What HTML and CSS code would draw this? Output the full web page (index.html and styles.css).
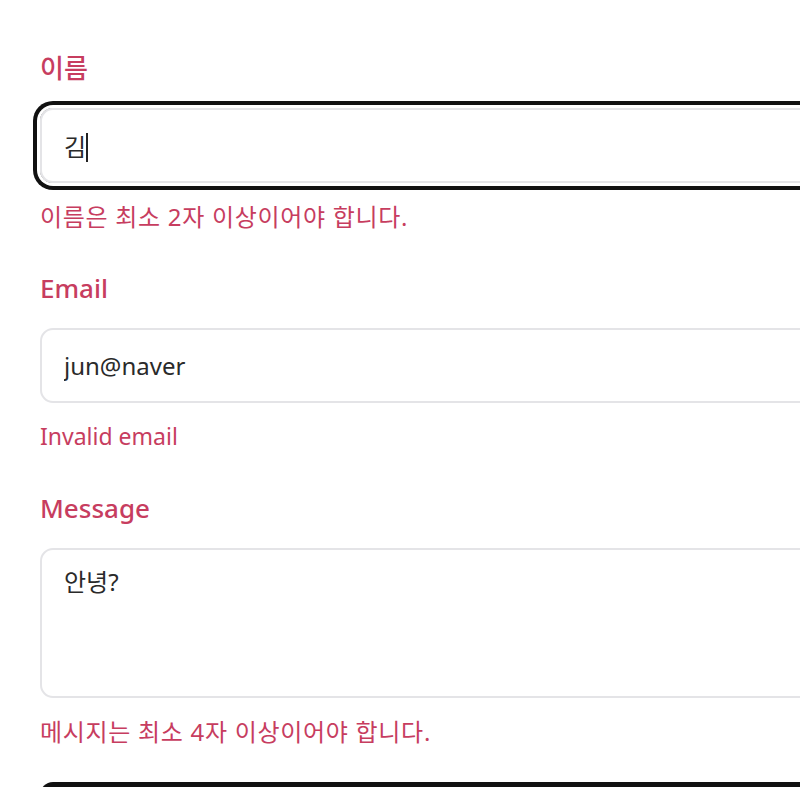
FILE: index.html
```html
<!DOCTYPE html>
<html lang="ko">

<head>
    <meta charset="UTF-8">
    <meta name="viewport" content="width=device-width, initial-scale=1.0">
    <title>Contact</title>
    <link rel="stylesheet" href="styles.css">
</head>

<body>
    <main class="page">
        <form class="contact-form" novalidate>
            <div class="field">
                <label class="field-label" for="name">이름</label>
                <div class="field-input is-focused">
                    <input id="name" type="text" value="김">
                    <!-- caret shown while typing -->
                    <span class="caret"></span>
                </div>
                <p class="field-error hangul">이름은 최소 2자 이상이어야 합니다.</p>
            </div>

            <div class="field">
                <label class="field-label" for="email">Email</label>
                <div class="field-input">
                    <input id="email" type="email" value="jun@naver">
                </div>
                <p class="field-error">Invalid email</p>
            </div>

            <div class="field">
                <label class="field-label" for="message">Message</label>
                <div class="field-input">
                    <textarea id="message">안녕?</textarea>
                </div>
                <p class="field-error hangul">메시지는 최소 4자 이상이어야 합니다.</p>
            </div>

            <button type="submit" class="submit-btn">Submit</button>
        </form>
    </main>
</body>

</html>
```

FILE: styles.css
```css
:root {
    --error-color: #c73d5f;
    --text-color: #2a2a2a;
    --border-color: #e4e4e7;
    --ring-color: #111;
}

* {
    box-sizing: border-box;
    margin: 0;
    padding: 0;
}

body {
    font-family: 'Noto Sans', 'Noto Sans CJK KR', sans-serif;
    color: var(--text-color);
    background-color: #fff;
    overflow: hidden;
}

.page {
    padding: 53px 0 0 40px;
    width: 1000px;
}

.contact-form {
    display: flex;
    flex-direction: column;
}

.field {
    display: flex;
    flex-direction: column;
    margin-bottom: 38px;
}

.field:last-of-type {
    margin-bottom: 32px;
}

.field-label {
    font-size: 26px;
    font-weight: 500;
    line-height: 30px;
    color: var(--error-color);
    margin-bottom: 25px;
}

.field-input {
    position: relative;
    border-radius: 13px;
}

.field-input.is-focused {
    box-shadow: 0 0 0 3px #fff, 0 0 0 7px var(--ring-color);
}

.field-input input,
.field-input textarea {
    display: block;
    width: 100%;
    border: 2px solid var(--border-color);
    border-radius: 13px;
    background: #fff;
    font-family: inherit;
    font-size: 24px;
    color: var(--text-color);
    padding: 0 22px;
    outline: none;
}

.field-input input {
    height: 75px;
}

.field-input textarea {
    height: 150px;
    padding-top: 13px;
    line-height: 37px;
    resize: none;
}

.caret {
    position: absolute;
    left: 46px;
    top: 25px;
    width: 2px;
    height: 29px;
    background-color: #222;
}

.field-error {
    font-size: 23px;
    font-weight: 400;
    line-height: 37px;
    color: var(--error-color);
    margin-top: 15px;
}

.field-error.hangul {
    font-size: 24px;
    letter-spacing: 0.7px;
}

.submit-btn {
    height: 75px;
    border: none;
    border-radius: 13px;
    background-color: #111;
    color: #fff;
    font-family: inherit;
    font-size: 25px;
    font-weight: 500;
}
```
